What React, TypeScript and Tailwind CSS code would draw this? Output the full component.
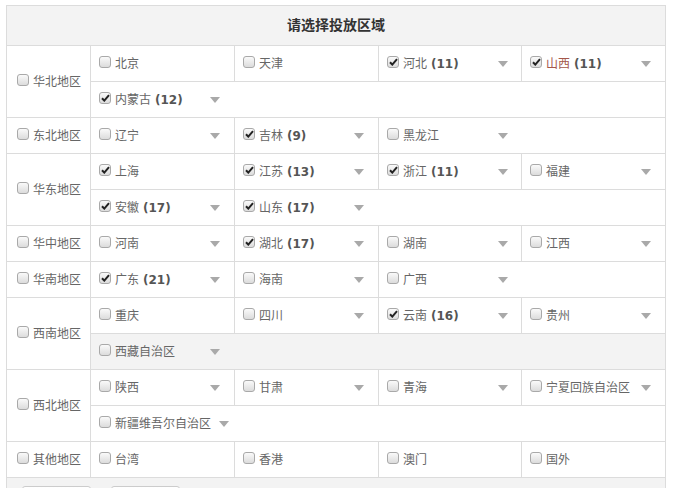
import React from "react";

// 投放区域选择表：左侧大区 + 右侧省份，勾选后显示已选城市数
interface Prov {
  n: string;
  c?: number;
  on?: boolean;
  dd?: boolean;
  span?: 1 | 2 | 3 | 4;
  hot?: boolean;
}

interface Region {
  name: string;
  rows: Prov[][];
  grayRow?: number;
}

const REGIONS: Region[] = [
  {
    name: "华北地区",
    rows: [
      [
        { n: "北京" },
        { n: "天津" },
        { n: "河北", c: 11, on: true, dd: true },
        { n: "山西", c: 11, on: true, dd: true, hot: true },
      ],
      [{ n: "内蒙古", c: 12, on: true, dd: true, span: 4 }],
    ],
  },
  {
    name: "东北地区",
    rows: [
      [
        { n: "辽宁", dd: true },
        { n: "吉林", c: 9, on: true, dd: true },
        { n: "黑龙江", dd: true, span: 2 },
      ],
    ],
  },
  {
    name: "华东地区",
    rows: [
      [
        { n: "上海", on: true },
        { n: "江苏", c: 13, on: true, dd: true },
        { n: "浙江", c: 11, on: true, dd: true },
        { n: "福建", dd: true },
      ],
      [
        { n: "安徽", c: 17, on: true, dd: true },
        { n: "山东", c: 17, on: true, dd: true, span: 3 },
      ],
    ],
  },
  {
    name: "华中地区",
    rows: [
      [
        { n: "河南", dd: true },
        { n: "湖北", c: 17, on: true, dd: true },
        { n: "湖南", dd: true },
        { n: "江西", dd: true },
      ],
    ],
  },
  {
    name: "华南地区",
    rows: [
      [
        { n: "广东", c: 21, on: true, dd: true },
        { n: "海南", dd: true },
        { n: "广西", dd: true, span: 2 },
      ],
    ],
  },
  {
    name: "西南地区",
    grayRow: 1,
    rows: [
      [
        { n: "重庆" },
        { n: "四川", dd: true },
        { n: "云南", c: 16, on: true, dd: true },
        { n: "贵州", dd: true },
      ],
      [{ n: "西藏自治区", dd: true, span: 4 }],
    ],
  },
  {
    name: "西北地区",
    rows: [
      [
        { n: "陕西", dd: true },
        { n: "甘肃", dd: true },
        { n: "青海", dd: true },
        { n: "宁夏回族自治区", dd: true },
      ],
      [{ n: "新疆维吾尔自治区", dd: true, span: 4 }],
    ],
  },
  {
    name: "其他地区",
    rows: [[{ n: "台湾" }, { n: "香港" }, { n: "澳门" }, { n: "国外" }]],
  },
];

const SPAN: Record<number, string> = {
  1: "col-span-1",
  2: "col-span-2",
  3: "col-span-3",
  4: "col-span-4",
};

const FONT = { fontFamily: '"DejaVu Sans", "Noto Sans CJK SC", sans-serif' };

function Check({ on }: { on?: boolean }) {
  return (
    <span className="relative -top-[2px] flex h-[12px] w-[12px] shrink-0 items-center justify-center rounded-[3px] border border-[#a9a9a9] bg-gradient-to-b from-[#fafafa] to-[#dcdcdc]">
      {on && (
        <svg width="9" height="8" viewBox="0 0 9 8">
          <path d="M1 4.2 L3.3 6.6 L8 1.2" fill="none" stroke="#222" strokeWidth="2" />
        </svg>
      )}
    </span>
  );
}

function Caret() {
  return (
    <svg width="10" height="6" viewBox="0 0 10 6" className="shrink-0">
      <polygon points="0,0 10,0 5,6" fill="#a9a9a9" />
    </svg>
  );
}

function Item({ p }: { p: Prov }) {
  return (
    <div className="flex min-w-[121px] items-center gap-[4px]">
      <Check on={p.on} />
      <span className={`shrink-0 whitespace-nowrap text-[12px] ${p.hot ? "text-[#a4574a]" : "text-[#666]"}`}>
        {p.n}
        {p.c !== undefined && (
          <b className="ml-[4px] font-bold text-[#555]" style={{ fontFamily: '"DejaVu Sans", sans-serif' }}>
            ({p.c})
          </b>
        )}
      </span>
      {p.dd && (
        <span className="ml-auto pl-[4px]">
          <Caret />
        </span>
      )}
    </div>
  );
}

export default function App() {
  return (
    <div className="h-[488px] w-[687px] overflow-hidden bg-white" style={FONT}>
      <div className="ml-[6px] mt-[5px] grid w-[660px] grid-cols-[84px_144px_144px_143px_144px] grid-rows-[40px] auto-rows-[36px] border-l border-t border-[#dcdcdc]">
        <div className="col-span-5 flex items-center justify-center border-b border-r border-[#dcdcdc] bg-[#f3f3f3] text-[14px] font-bold text-[#333]">
          请选择投放区域
        </div>

        {REGIONS.map((r) => (
          <React.Fragment key={r.name}>
            <div
              className={`flex items-center gap-[4px] border-b border-r border-[#dcdcdc] pl-[10px] ${
                r.rows.length === 2 ? "row-span-2" : "row-span-1"
              }`}
            >
              <Check />
              <span className="text-[12px] text-[#666]">{r.name}</span>
            </div>
            {r.rows.map((row, ri) =>
              row.map((p) => (
                <div
                  key={p.n}
                  className={`flex items-center border-b border-r border-[#dcdcdc] pl-[8px] ${SPAN[p.span ?? 1]} ${
                    r.grayRow === ri ? "bg-[#f3f3f3]" : ""
                  }`}
                >
                  <Item p={p} />
                </div>
              ))
            )}
          </React.Fragment>
        ))}

        {/* 底部操作栏，截图中只露出按钮上沿 */}
        <div className="col-span-5 flex h-[44px] gap-[20px] border-r border-[#dcdcdc] bg-[#f3f3f3] px-[15px] pt-[8px]">
          <span className="h-[28px] w-[69px] rounded-[3px] border border-[#ccc] bg-gradient-to-b from-white to-[#eee]" />
          <span className="h-[28px] w-[69px] rounded-[3px] border border-[#ccc] bg-gradient-to-b from-white to-[#eee]" />
        </div>
      </div>
    </div>
  );
}
